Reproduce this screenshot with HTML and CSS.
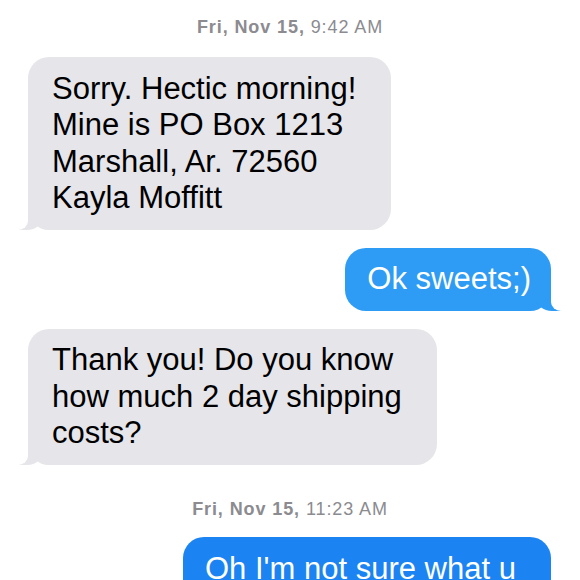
FILE: index.html
```html
<!DOCTYPE html>
<html>
<head>
<meta charset="utf-8">
<link rel="stylesheet" href="styles.css">
</head>
<body>
<div class="thread">
  <div class="stamp"><b>Fri, Nov 15,</b> 9:42 AM</div>
  <div class="msg in first">Sorry. Hectic morning!<br>Mine is PO Box 1213<br>Marshall, Ar. 72560<br>Kayla Moffitt</div>
  <div class="msg out light">Ok sweets;)</div>
  <div class="msg in">Thank you! Do you know<br>how much 2 day shipping<br>costs?</div>
  <div class="stamp second"><b>Fri, Nov 15,</b> 11:23 AM</div>
  <div class="msg out dark wide">Oh I'm not sure what u mean</div>
</div>
</body>
</html>
```

FILE: styles.css
```css
html, body {
  margin: 0;
  padding: 0;
  background: #ffffff;
  height: 580px;
  overflow: hidden;
}

.thread {
  display: flex;
  flex-direction: column;
  padding: 17px 29px 0 28px;
  font-family: "Liberation Sans", Arial, sans-serif;
}

.stamp {
  align-self: center;
  font-size: 18px;
  line-height: 20px;
  letter-spacing: 0.9px;
  color: #8b8b90;
  margin-bottom: 20px;
  padding-left: 1px;
}

.stamp b {
  font-weight: bold;
}

.stamp.second {
  margin-top: 34px;
  margin-bottom: 18px;
}

.msg {
  position: relative;
  font-size: 31px;
  line-height: 36.5px;
  border-radius: 21px;
  padding: 13.5px 20px 13.5px 22px;
  box-sizing: border-box;
  width: fit-content;
}

.msg + .msg {
  margin-top: 17.5px;
}

.in {
  align-self: flex-start;
  background: #e5e5ea;
  color: #000;
  padding-left: 24px;
  padding-right: 35px;
}

.out {
  align-self: flex-end;
  color: #fff;
}

.light { background: #2e9cf5; }
.dark { background: #1b84f2; }

.wide {
  max-width: 368px;
}

.msg::before,
.msg::after {
  content: "";
  position: absolute;
  bottom: 0;
}

.in::before {
  left: -9px;
  width: 24px;
  height: 24px;
  background: #e5e5ea;
  border-bottom-right-radius: 16px 14px;
}

.in::after {
  left: -14px;
  width: 14px;
  height: 26px;
  background: #fff;
  border-bottom-right-radius: 10px 9px;
}

.out::before {
  right: -11px;
  width: 26px;
  height: 24px;
  border-bottom-left-radius: 16px 14px;
}

.light::before { background: #2e9cf5; }
.dark::before { background: #1b84f2; }

.out::after {
  right: -16px;
  width: 16px;
  height: 26px;
  background: #fff;
  border-bottom-left-radius: 10px 9px;
}
```
